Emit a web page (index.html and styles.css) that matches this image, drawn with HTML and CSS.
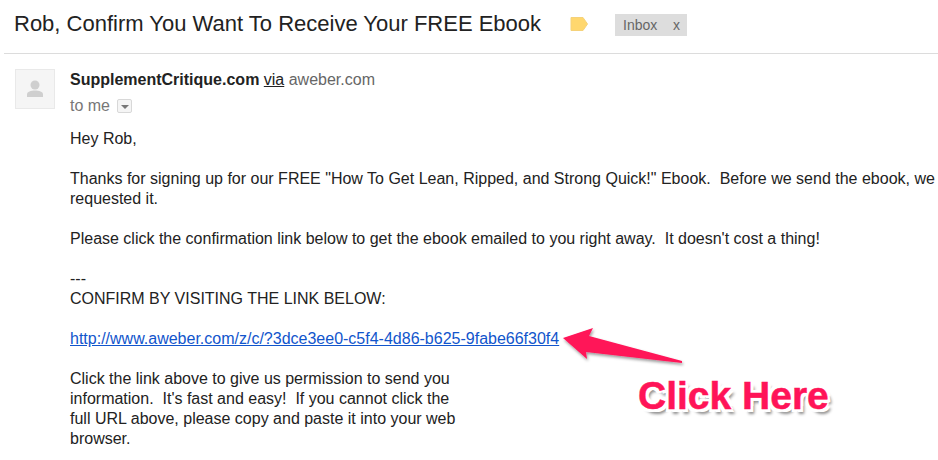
FILE: index.html
```html
<!DOCTYPE html>
<html lang="en">

<head>
    <meta charset="UTF-8">
    <title>Rob, Confirm You Want To Receive Your FREE Ebook</title>
    <link rel="stylesheet" href="styles.css">
</head>

<body>
    <div class="page">
        <div class="subject-row">
            <h1 class="subject">Rob, Confirm You Want To Receive Your FREE Ebook</h1>
            <svg class="label-tag" width="18" height="14" viewBox="0 0 18 14">
                <path d="M1 .5H13L17.500 7L13 13.500H1Z" fill="#ffd76e" stroke="#f5d27a" />
            </svg>
            <div class="inbox-chip"><span>Inbox</span><span class="chip-x">x</span></div>
        </div>

        <div class="message">
            <div class="avatar">
                <svg width="18" height="18" viewBox="0 0 18 18">
                    <circle cx="9" cy="5" r="4.500" fill="#cfcfcf" />
                    <path d="M1 17V14.500C1 11.500 5 10.500 9 10.500S17 11.500 17 14.500V17Z" fill="#cfcfcf" />
                </svg>
            </div>

            <div class="message-main">
                <div class="sender">
                    <b>SupplementCritique.com</b>
                    <u class="via">via</u>
                    <span class="domain">aweber.com</span>
                </div>
                <div class="recipient">
                    <span>to me</span>
                    <span class="details-btn"></span>
                </div>

                <div class="body-text">
                    <p>Hey Rob,</p>
                    <p>Thanks for signing up for our FREE "How To Get Lean, Ripped, and Strong Quick!" Ebook.&nbsp; Before we send the ebook, we<br>requested it.</p>
                    <p>Please click the confirmation link below to get the ebook emailed to you right away.&nbsp; It doesn't cost a thing!</p>
                    <p>---<br>CONFIRM BY VISITING THE LINK BELOW:</p>
                    <p><a href="#">http://www.aweber.com/z/c/?3dce3ee0-c5f4-4d86-b625-9fabe66f30f4</a></p>
                    <p>Click the link above to give us permission to send you<br>information.&nbsp; It's fast and easy!&nbsp; If you cannot click the<br>full URL above, please copy and paste it into your web<br>browser.</p>
                </div>
            </div>
        </div>

        <!-- annotation drawn over the mail -->
        <svg class="arrow" width="130" height="44" viewBox="0 0 130 44">
            <defs>
                <filter id="arrow-shadow" x="-10%" y="-20%" width="120%" height="150%">
                    <feDropShadow dx="1" dy="2" stdDeviation="1.500" flood-color="#000" flood-opacity="0.4" />
                </filter>
            </defs>
            <path d="M1 11L31 1L27 9L120 34L120 36L24 25L25 32Z" fill="#ff1458" filter="url(#arrow-shadow)" />
        </svg>
        <div class="click-here">Click Here</div>
    </div>
</body>

</html>
```

FILE: styles.css
```css
* {
    margin: 0;
    padding: 0;
    box-sizing: border-box;
}

html,
body {
    width: 938px;
    height: 460px;
    overflow: hidden;
    background: #fff;
}

body {
    font-family: "Liberation Sans", Arial, sans-serif;
    color: #222;
}

.page {
    position: relative;
    width: 938px;
    height: 460px;
    overflow: hidden;
}

.subject-row {
    display: flex;
    align-items: center;
    height: 54px;
    margin-left: 4px;
    padding: 0 0 6px 10px;
    border-bottom: 1px solid #dcdcdc;
}

.subject {
    font-size: 22px;
    font-weight: normal;
    white-space: nowrap;
}

.label-tag {
    margin-top: 1px;
    margin-left: 29px;
}

.inbox-chip {
    display: flex;
    justify-content: space-between;
    width: 72px;
    height: 22px;
    margin-top: 2px;
    margin-left: 27px;
    padding: 0 7px 0 8px;
    font-size: 14px;
    line-height: 22px;
    color: #666;
    background: #ddd;
}

.message {
    display: flex;
    padding: 15px 0 0 15px;
}

.avatar {
    display: flex;
    align-items: center;
    justify-content: center;
    flex: none;
    width: 40px;
    height: 40px;
    background: #f5f5f5;
    border: 1px solid #e9e9e9;
}

.message-main {
    margin-left: 15px;
    white-space: nowrap;
}

.sender {
    height: 20px;
    font-size: 16px;
    line-height: 22px;
}

.domain {
    color: #666;
}

.recipient {
    display: flex;
    align-items: center;
    height: 21px;
    margin-top: 6px;
    font-size: 16px;
    color: #777;
}

.details-btn {
    position: relative;
    width: 15px;
    height: 14px;
    margin-left: 7px;
    background: #f5f5f5;
    border: 1px solid #d8d8d8;
    border-radius: 2px;
}

.details-btn::after {
    content: "";
    position: absolute;
    top: 5px;
    left: 3px;
    border: 4px solid transparent;
    border-top-color: #777;
    border-bottom-width: 0;
}

.body-text {
    margin-top: 13px;
    font-size: 16px;
    line-height: 20px;
    color: #222;
}

.body-text p {
    margin-bottom: 20px;
}

.body-text a {
    color: #1155cc;
}

.arrow {
    position: absolute;
    left: 562px;
    top: 327px;
}

.click-here {
    position: absolute;
    left: 638px;
    top: 373px;
    font-size: 39px;
    font-weight: bold;
    line-height: 46px;
    white-space: nowrap;
    color: #ff1458;
    -webkit-text-stroke: 0.5px #ff1458;
    text-shadow: 2px 0 0 #fff, -2px 0 0 #fff, 0 2px 0 #fff, 0 -2px 0 #fff,
        3px 3px 0 #fff, -3px 3px 0 #fff, 3px -3px 0 #fff, -3px -3px 0 #fff,
        4px 5px 3px rgba(0, 0, 0, 0.45);
}
```
